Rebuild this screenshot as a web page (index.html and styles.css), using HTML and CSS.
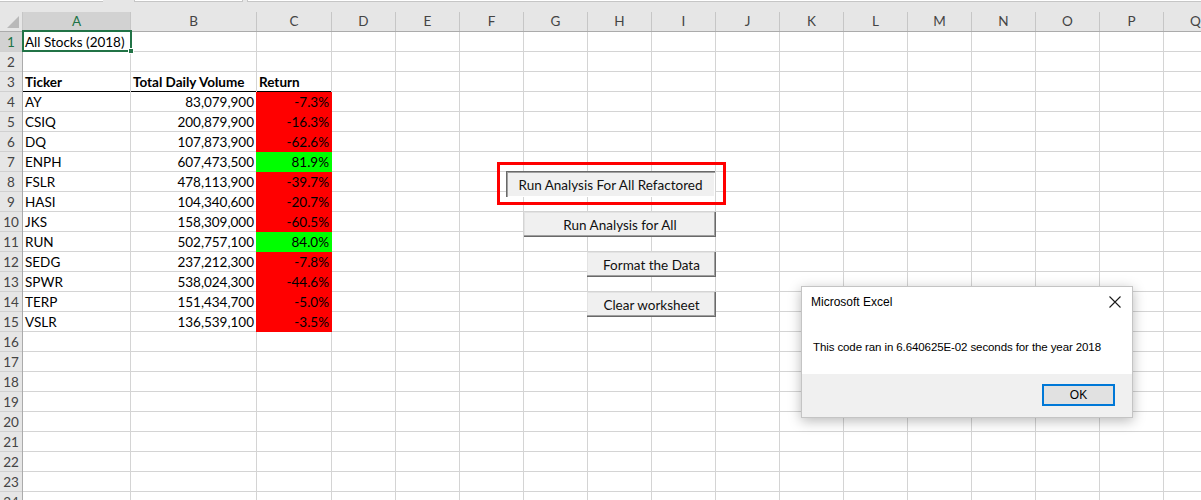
FILE: index.html
```html
<!DOCTYPE html>
<html>
<head>
<meta charset="utf-8">
<title>Excel - All Stocks (2018)</title>
<link rel="stylesheet" href="styles.css">
</head>
<body>
<div class="app">
  <div class="topbar">
    <span class="tb tb1"></span><span class="tb tb2"></span><span class="tb tb3"></span>
  </div>
  <div class="colheads">
    <div class="corner"><span class="tri"></span></div>
    <div class="ch w-a sel">A</div>
    <div class="ch w-b">B</div>
    <div class="ch w-c">C</div>
    <div class="ch">D</div>
    <div class="ch">E</div>
    <div class="ch">F</div>
    <div class="ch">G</div>
    <div class="ch">H</div>
    <div class="ch">I</div>
    <div class="ch">J</div>
    <div class="ch">K</div>
    <div class="ch">L</div>
    <div class="ch">M</div>
    <div class="ch">N</div>
    <div class="ch">O</div>
    <div class="ch">P</div>
    <div class="ch">Q</div>
  </div>
  <div class="sheet">
    <div class="rowheads">
      <div class="rh sel">1</div><div class="rh">2</div><div class="rh">3</div><div class="rh">4</div>
      <div class="rh">5</div><div class="rh">6</div><div class="rh">7</div><div class="rh">8</div>
      <div class="rh">9</div><div class="rh">10</div><div class="rh">11</div><div class="rh">12</div>
      <div class="rh">13</div><div class="rh">14</div><div class="rh">15</div><div class="rh">16</div>
      <div class="rh">17</div><div class="rh">18</div><div class="rh">19</div><div class="rh">20</div>
      <div class="rh">21</div><div class="rh">22</div><div class="rh">23</div><div class="rh">24</div>
    </div>
    <div class="col w-a">
      <div class="cell">All Stocks (2018)</div>
      <div class="cell"></div>
      <div class="cell head">Ticker</div>
      <div class="cell">AY</div>
      <div class="cell">CSIQ</div>
      <div class="cell">DQ</div>
      <div class="cell">ENPH</div>
      <div class="cell">FSLR</div>
      <div class="cell">HASI</div>
      <div class="cell">JKS</div>
      <div class="cell">RUN</div>
      <div class="cell">SEDG</div>
      <div class="cell">SPWR</div>
      <div class="cell">TERP</div>
      <div class="cell">VSLR</div>
    </div>
    <div class="col w-b">
      <div class="cell"></div>
      <div class="cell"></div>
      <div class="cell head">Total Daily Volume</div>
      <div class="cell num">83,079,900</div>
      <div class="cell num">200,879,900</div>
      <div class="cell num">107,873,900</div>
      <div class="cell num">607,473,500</div>
      <div class="cell num">478,113,900</div>
      <div class="cell num">104,340,600</div>
      <div class="cell num">158,309,000</div>
      <div class="cell num">502,757,100</div>
      <div class="cell num">237,212,300</div>
      <div class="cell num">538,024,300</div>
      <div class="cell num">151,434,700</div>
      <div class="cell num">136,539,100</div>
    </div>
    <div class="col w-c">
      <div class="cell"></div>
      <div class="cell"></div>
      <div class="cell head">Return</div>
      <div class="cell num neg">-7.3%</div>
      <div class="cell num neg">-16.3%</div>
      <div class="cell num neg">-62.6%</div>
      <div class="cell num pos">81.9%</div>
      <div class="cell num neg">-39.7%</div>
      <div class="cell num neg">-20.7%</div>
      <div class="cell num neg">-60.5%</div>
      <div class="cell num pos">84.0%</div>
      <div class="cell num neg">-7.8%</div>
      <div class="cell num neg">-44.6%</div>
      <div class="cell num neg">-5.0%</div>
      <div class="cell num neg">-3.5%</div>
    </div>
    <div class="col"></div><div class="col"></div><div class="col"></div><div class="col"></div>
    <div class="col"></div><div class="col"></div><div class="col"></div><div class="col"></div>
    <div class="col"></div><div class="col"></div><div class="col"></div><div class="col"></div>
    <div class="col"></div><div class="col"></div>

    <div class="selection"><span class="handle"></span></div>
  </div>

  <div class="highlight"></div>
  <button class="xbtn pressed b1">Run Analysis For All Refactored</button>
  <button class="xbtn b2">Run Analysis for All</button>
  <button class="xbtn b3">Format the Data</button>
  <button class="xbtn b4">Clear worksheet</button>

  <div class="dialog">
    <div class="dlg-title">
      <span>Microsoft Excel</span>
      <svg class="dlg-close" width="12" height="12" viewBox="0 0 12 12"><path d="M0.5 0.5 L11.5 11.5 M11.5 0.5 L0.5 11.5" stroke="#1a1a1a" stroke-width="1.1" fill="none"/></svg>
    </div>
    <div class="dlg-body">This code ran in 6.640625E-02 seconds for the year 2018</div>
    <div class="dlg-foot"><button class="ok">OK</button></div>
  </div>
</div>
</body>
</html>
```
FILE: styles.css
```css
* { box-sizing: border-box; }
html, body { margin: 0; padding: 0; background: #fff; }
body { font-family: Lato, "Liberation Sans", sans-serif; font-size: 13.5px; color: #000; overflow: hidden; }
.app { position: relative; width: 1201px; height: 500px; overflow: hidden; }

.topbar { height: 12px; background: #e6e6e6; display: flex; align-items: flex-start; }
.tb { height: 2px; background: #fff; border-bottom: 1px solid #c6c6c6; }
.tb1 { width: 103px; }
.tb2 { width: 109px; margin-left: 31px; border-left: 1px solid #c6c6c6; border-right: 1px solid #c6c6c6; }
.tb3 { flex: 1; margin-left: 4px; border-left: 1px solid #c6c6c6; }

.colheads { display: flex; height: 20px; background: #e6e6e6; border-bottom: 1px solid #ababab; }
.corner { width: 23px; flex: none; position: relative; border-right: 1px solid #c6c6c6; }
.tri { position: absolute; left: 7px; top: 4px; width: 0; height: 0; border-left: 12px solid transparent; border-bottom: 12px solid #b9b9b9; }
.ch { width: 64px; flex: none; border-right: 1px solid #c6c6c6; text-align: center; line-height: 19px; color: #444; font-size: 13.5px; }
.ch.sel { background: #d2d2d2; color: #217346; }
.w-a { width: 108px; }
.w-b { width: 126px; }
.w-c { width: 75px; }

.sheet { display: flex; position: relative; }
.rowheads { width: 23px; flex: none; background: #e6e6e6; border-right: 1px solid #ababab; }
.rh { height: 20px; line-height: 20px; border-bottom: 1px solid #d0d0d0; text-align: center; color: #444; font-size: 13.5px; }
.rh.sel { background: #d2d2d2; color: #217346; }

.col { width: 64px; flex: none; height: 480px; border-right: 1px solid #d4d4d4;
  background: repeating-linear-gradient(to bottom, transparent 0 19px, #d4d4d4 19px 20px); }
.col.w-a { width: 108px; }
.col.w-b { width: 126px; }
.col.w-c { width: 75px; }

.cell { height: 20px; line-height: 20px; padding: 0 2px 0 2px; white-space: nowrap; overflow: visible; }
.cell.head { font-weight: 700; border-bottom: 1px solid #000; }
.cell.num { text-align: right; }
.cell.neg, .cell.pos { margin-left: -1px; width: calc(100% + 2px); padding-right: 3px; }
.cell.neg { background: #ff0000; }
.cell.pos { background: #00ff00; }

.selection { position: absolute; left: 22px; top: -2px; width: 110px; height: 22px; border: 2px solid #217346; pointer-events: none; }
.handle { position: absolute; right: -4px; bottom: -4px; width: 6px; height: 6px; background: #217346; border: 1px solid #fff; }

.highlight { position: absolute; left: 497px; top: 162px; width: 229px; height: 43px; border: 3px solid #ff0000; }
.xbtn { position: absolute; font-family: Lato, "Liberation Sans", sans-serif; font-size: 13.5px; color: #111; background: #f0f0f0; border: 0; padding: 0; margin: 0;
  box-shadow: inset -1px -1px 0 #696969, inset -2px -2px 0 #a0a0a0, inset 1px 1px 0 #e3e3e3; }
.xbtn.pressed { box-shadow: inset 1px 1px 0 #696969, inset 2px 2px 0 #a0a0a0, inset -1px -1px 0 #fff; }
.b1 { left: 506px; top: 171px; width: 209px; height: 26px; padding-top: 1px; }
.b2 { left: 524px; top: 212px; width: 192px; height: 25px; }
.b3 { left: 587px; top: 252px; width: 129px; height: 25px; }
.b4 { left: 587px; top: 292px; width: 129px; height: 25px; }

.dialog { position: absolute; left: 801px; top: 286px; width: 332px; height: 132px; background: #fff; border: 1px solid #c4c4c4;
  box-shadow: 0 3px 12px rgba(0,0,0,0.28); display: flex; flex-direction: column; font-family: "Liberation Sans", Arial, sans-serif; font-size: 12px; color: #000; }
.dlg-title { height: 31px; display: flex; align-items: center; justify-content: space-between; padding: 0 11px 1px 9px; }
.dlg-close { display: block; }
.dlg-body { flex: 1; padding: 23px 0 0 11px; white-space: nowrap; font-size: 11.5px; letter-spacing: -0.1px; }
.dlg-foot { height: 43px; background: #f0f0f0; display: flex; justify-content: flex-end; align-items: flex-start; padding: 10px 17px 0 0; }
.ok { width: 73px; height: 22px; background: #e1e1e1; border: 2px solid #0078d7; font-family: "Liberation Sans", Arial, sans-serif; font-size: 12px; color: #000; padding: 0; }
```
